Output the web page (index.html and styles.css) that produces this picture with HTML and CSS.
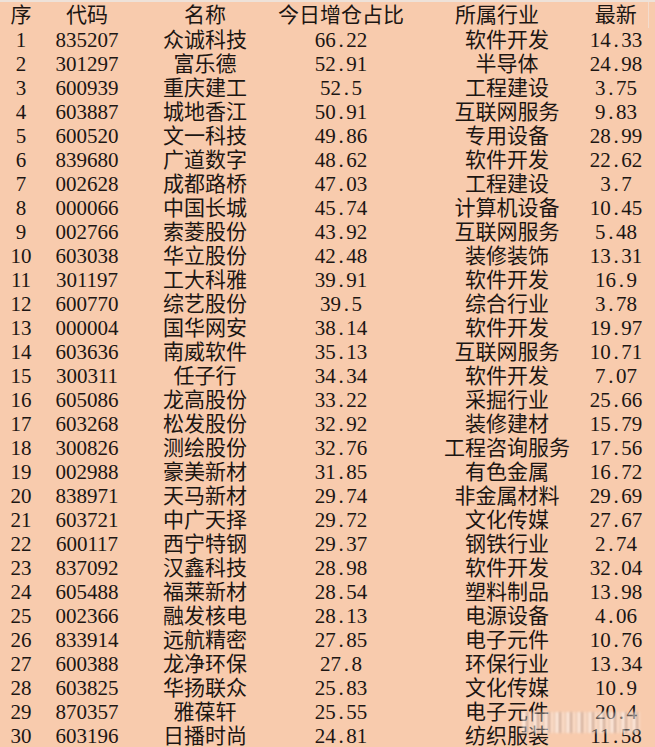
FILE: index.html
```html
<!DOCTYPE html>
<html lang="zh-CN">
<head>
<meta charset="utf-8">
<title>今日增仓占比</title>
<link rel="stylesheet" href="styles.css">
</head>
<body>
<table class="sheet">
<colgroup>
<col class="c-idx"><col class="c-code"><col class="c-name"><col class="c-ratio"><col class="c-ind"><col class="c-last"><col class="c-rest">
</colgroup>
<thead>
<tr><th>序</th><th>代码</th><th>名称</th><th>今日增仓占比</th><th class="ind">所属行业</th><th>最新</th><th class="rest"></th></tr>
</thead>
<tbody>
<tr><td>1</td><td>835207</td><td>众诚科技</td><td>66<span class="d">.</span>22</td><td class="ind">软件开发</td><td>14<span class="d">.</span>33</td><td></td></tr>
<tr><td>2</td><td>301297</td><td>富乐德</td><td>52<span class="d">.</span>91</td><td class="ind">半导体</td><td>24<span class="d">.</span>98</td><td></td></tr>
<tr><td>3</td><td>600939</td><td>重庆建工</td><td>52<span class="d">.</span>5</td><td class="ind">工程建设</td><td>3<span class="d">.</span>75</td><td></td></tr>
<tr><td>4</td><td>603887</td><td>城地香江</td><td>50<span class="d">.</span>91</td><td class="ind">互联网服务</td><td>9<span class="d">.</span>83</td><td></td></tr>
<tr><td>5</td><td>600520</td><td>文一科技</td><td>49<span class="d">.</span>86</td><td class="ind">专用设备</td><td>28<span class="d">.</span>99</td><td></td></tr>
<tr><td>6</td><td>839680</td><td>广道数字</td><td>48<span class="d">.</span>62</td><td class="ind">软件开发</td><td>22<span class="d">.</span>62</td><td></td></tr>
<tr><td>7</td><td>002628</td><td>成都路桥</td><td>47<span class="d">.</span>03</td><td class="ind">工程建设</td><td>3<span class="d">.</span>7</td><td></td></tr>
<tr><td>8</td><td>000066</td><td>中国长城</td><td>45<span class="d">.</span>74</td><td class="ind">计算机设备</td><td>10<span class="d">.</span>45</td><td></td></tr>
<tr><td>9</td><td>002766</td><td>索菱股份</td><td>43<span class="d">.</span>92</td><td class="ind">互联网服务</td><td>5<span class="d">.</span>48</td><td></td></tr>
<tr><td>10</td><td>603038</td><td>华立股份</td><td>42<span class="d">.</span>48</td><td class="ind">装修装饰</td><td>13<span class="d">.</span>31</td><td></td></tr>
<tr><td>11</td><td>301197</td><td>工大科雅</td><td>39<span class="d">.</span>91</td><td class="ind">软件开发</td><td>16<span class="d">.</span>9</td><td></td></tr>
<tr><td>12</td><td>600770</td><td>综艺股份</td><td>39<span class="d">.</span>5</td><td class="ind">综合行业</td><td>3<span class="d">.</span>78</td><td></td></tr>
<tr><td>13</td><td>000004</td><td>国华网安</td><td>38<span class="d">.</span>14</td><td class="ind">软件开发</td><td>19<span class="d">.</span>97</td><td></td></tr>
<tr><td>14</td><td>603636</td><td>南威软件</td><td>35<span class="d">.</span>13</td><td class="ind">互联网服务</td><td>10<span class="d">.</span>71</td><td></td></tr>
<tr><td>15</td><td>300311</td><td>任子行</td><td>34<span class="d">.</span>34</td><td class="ind">软件开发</td><td>7<span class="d">.</span>07</td><td></td></tr>
<tr><td>16</td><td>605086</td><td>龙高股份</td><td>33<span class="d">.</span>22</td><td class="ind">采掘行业</td><td>25<span class="d">.</span>66</td><td></td></tr>
<tr><td>17</td><td>603268</td><td>松发股份</td><td>32<span class="d">.</span>92</td><td class="ind">装修建材</td><td>15<span class="d">.</span>79</td><td></td></tr>
<tr><td>18</td><td>300826</td><td>测绘股份</td><td>32<span class="d">.</span>76</td><td class="ind">工程咨询服务</td><td>17<span class="d">.</span>56</td><td></td></tr>
<tr><td>19</td><td>002988</td><td>豪美新材</td><td>31<span class="d">.</span>85</td><td class="ind">有色金属</td><td>16<span class="d">.</span>72</td><td></td></tr>
<tr><td>20</td><td>838971</td><td>天马新材</td><td>29<span class="d">.</span>74</td><td class="ind">非金属材料</td><td>29<span class="d">.</span>69</td><td></td></tr>
<tr><td>21</td><td>603721</td><td>中广天择</td><td>29<span class="d">.</span>72</td><td class="ind">文化传媒</td><td>27<span class="d">.</span>67</td><td></td></tr>
<tr><td>22</td><td>600117</td><td>西宁特钢</td><td>29<span class="d">.</span>37</td><td class="ind">钢铁行业</td><td>2<span class="d">.</span>74</td><td></td></tr>
<tr><td>23</td><td>837092</td><td>汉鑫科技</td><td>28<span class="d">.</span>98</td><td class="ind">软件开发</td><td>32<span class="d">.</span>04</td><td></td></tr>
<tr><td>24</td><td>605488</td><td>福莱新材</td><td>28<span class="d">.</span>54</td><td class="ind">塑料制品</td><td>13<span class="d">.</span>98</td><td></td></tr>
<tr><td>25</td><td>002366</td><td>融发核电</td><td>28<span class="d">.</span>13</td><td class="ind">电源设备</td><td>4<span class="d">.</span>06</td><td></td></tr>
<tr><td>26</td><td>833914</td><td>远航精密</td><td>27<span class="d">.</span>85</td><td class="ind">电子元件</td><td>10<span class="d">.</span>76</td><td></td></tr>
<tr><td>27</td><td>600388</td><td>龙净环保</td><td>27<span class="d">.</span>8</td><td class="ind">环保行业</td><td>13<span class="d">.</span>34</td><td></td></tr>
<tr><td>28</td><td>603825</td><td>华扬联众</td><td>25<span class="d">.</span>83</td><td class="ind">文化传媒</td><td>10<span class="d">.</span>9</td><td></td></tr>
<tr><td>29</td><td>870357</td><td>雅葆轩</td><td>25<span class="d">.</span>55</td><td class="ind">电子元件</td><td>20<span class="d">.</span>4</td><td></td></tr>
<tr><td>30</td><td>603196</td><td>日播时尚</td><td>24<span class="d">.</span>81</td><td class="ind">纺织服装</td><td>11<span class="d">.</span>58</td><td></td></tr>
</tbody>
</table>
<div class="watermark" aria-hidden="true"></div>
</body>
</html>
```
FILE: styles.css
```css
html, body {
  margin: 0;
  padding: 0;
  background: #f8cbad;
}
body {
  position: relative;
  width: 655px;
  height: 747px;
  overflow: hidden;
  font-family: "Liberation Serif", "Noto Sans CJK SC", serif;
  font-size: 21px;
  color: #1c1613;
}
.sheet {
  width: 655px;
  table-layout: fixed;
  border-collapse: collapse;
  border-top: 2px solid #eee2d9;
}
.c-idx { width: 42px; }
.c-code { width: 90px; }
.c-name { width: 146px; }
.c-ratio { width: 126px; }
.c-ind { width: 180px; }
.c-last { width: 64px; }
.c-rest { width: 7px; }
th, td {
  padding: 0;
  text-align: center;
  white-space: nowrap;
  font-weight: normal;
  overflow: visible;
}
th {
  height: 26px;
  line-height: 26px;
}
td {
  height: 24px;
  line-height: 24px;
}
th.ind {
  padding-left: 6px;
}
td.ind {
  padding-left: 26px;
}
th.rest {
  border-left: 1px solid #f3dccd;
}
.d {
  display: inline-block;
  width: 0.5em;
  text-align: center;
}
.watermark {
  position: absolute;
  left: 522px;
  top: 712px;
  width: 118px;
  height: 21px;
  background: repeating-linear-gradient(90deg,
    rgba(255, 250, 248, 0.55) 0 4px,
    rgba(120, 104, 104, 0.35) 4px 6px,
    rgba(255, 245, 240, 0.35) 6px 10px,
    rgba(150, 130, 130, 0.25) 10px 11px);
  filter: blur(1.2px);
}
```
